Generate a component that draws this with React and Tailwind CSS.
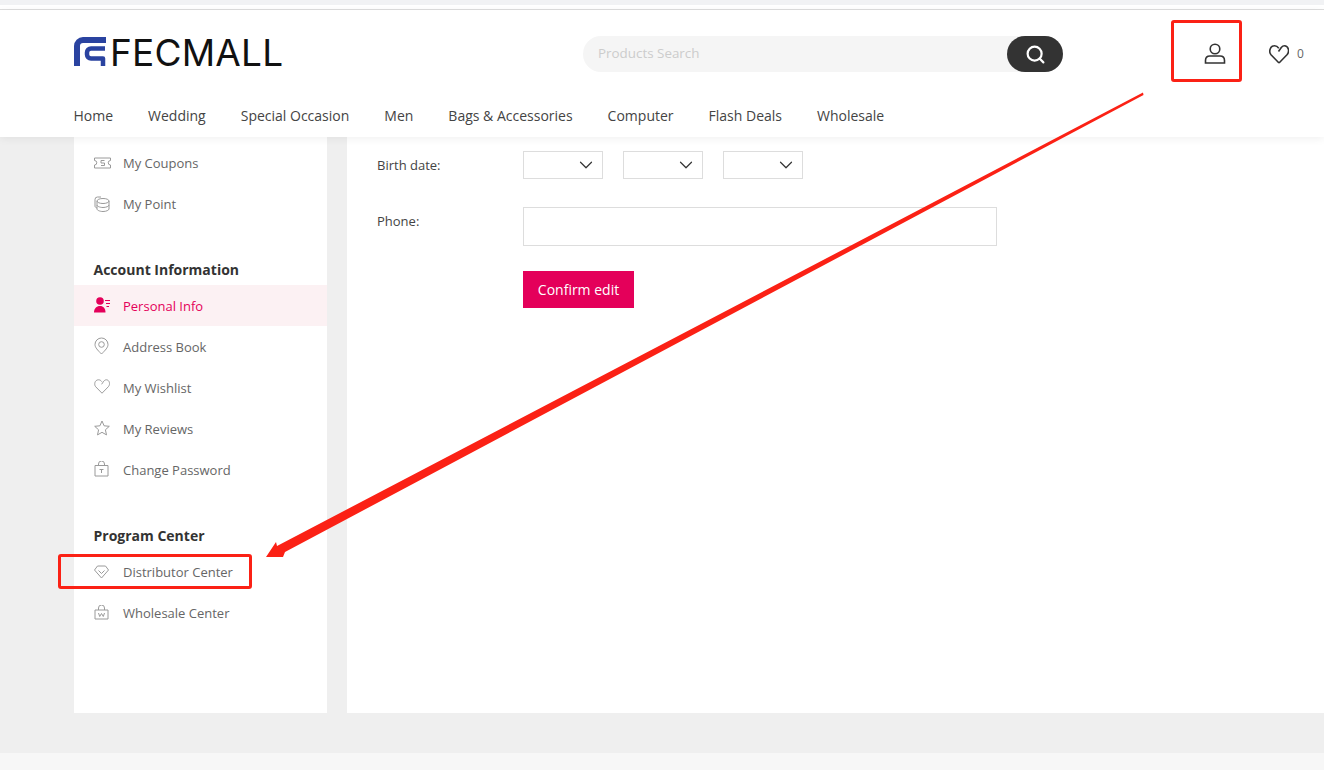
import { ChevronDown, Search } from 'lucide-react';

const navItems = ['Home', 'Wedding', 'Special Occasion', 'Men', 'Bags & Accessories', 'Computer', 'Flash Deals', 'Wholesale'];

const CouponIcon = () => (
    <svg width="17" height="12" viewBox="0 0 17 12" fill="none" stroke="#9a9a9a" strokeWidth="1">
        <path d="M.5 1h16v2.500a2.200 2.200 0 0 0 0 4.500V11H.5V8a2.200 2.200 0 0 0 0-4.500z" />
        <path d="M10.500 3.500H7v2.500h3.500v2.500H7" />
    </svg>
);
const PointIcon = () => (
    <svg width="16" height="16" viewBox="0 0 16 16" fill="none" stroke="#9a9a9a" strokeWidth="1">
        <ellipse cx="9" cy="5" rx="6" ry="2.500" />
        <path d="M3 5v8c0 1.200 2.700 2.500 6 2.500s6-1.300 6-2.500V5M3 9c0 1.200 2.700 2.500 6 2.500s6-1.300 6-2.500" />
        <path d="M7 1H3.500A2.500 2.500 0 0 0 1 3.500V10c0 1 .7 1.600 2 2" />
    </svg>
);
const PersonIcon = () => (
    <svg width="16" height="16" viewBox="0 0 16 16" fill="#e4005a">
        <circle cx="6" cy="4" r="3.800" />
        <path d="M0 15.500c0-4 2.500-6.500 6-6.500s5.500 2.500 5.500 6.500z" />
        <path d="M11 3h5v1h-5zM12 6h4v1h-4zM12.500 9h2.500v1h-2.500z" />
    </svg>
);
const PinIcon = () => (
    <svg width="15" height="18" viewBox="0 0 15 18" fill="none" stroke="#9a9a9a" strokeWidth="1">
        <path d="M7.500 17C3.500 13 1 10.500 1 7.500a6.500 6.500 0 0 1 13 0c0 3-2.500 5.500-6.500 9.500z" />
        <circle cx="7.500" cy="7.500" r="2.800" />
    </svg>
);
const WishIcon = () => (
    <svg width="16" height="15" viewBox="0 0 20 19" fill="none" stroke="#9a9a9a" strokeWidth="1.250" strokeLinejoin="round">
        <path d="M10 18 2 9.800C-.4 7 .8 1 5.600 1c1.700 0 3 .8 4.200 2.400M9.500 6.700 12.300 2.700C13.300 1.500 14.500 1 15.500 1c3.800 0 5.500 5.500 2.500 8.800L10 18" />
    </svg>
);
const StarIcon = () => (
    <svg width="16" height="16" viewBox="0 0 16 16" fill="none" stroke="#9a9a9a" strokeWidth="1" strokeLinejoin="round">
        <path d="M8 1l2.100 4.800 5.200.5-3.900 3.500 1.100 5.100L8 12.300l-4.500 2.600 1.100-5.100L.7 6.300l5.200-.5z" />
    </svg>
);
const LockIcon = () => (
    <svg width="15" height="16" viewBox="0 0 15 16" fill="none" stroke="#9a9a9a" strokeWidth="1">
        <path d="M1 4.500h13v10.500H1z" />
        <path d="M4.500 4.500V3a3 3 0 0 1 6 0v1.500" />
        <path d="M5.500 8.500h4M7.500 8.500V12" />
    </svg>
);
const DiamondIcon = () => (
    <svg width="15" height="14" viewBox="0 0 15 14" fill="none" stroke="#9a9a9a" strokeWidth="1" strokeLinejoin="round">
        <path d="M3.500 1h8l3 4-7 8-7-8z" />
        <path d="M4.500 5.500l3 3 3-3" />
    </svg>
);
const BagIcon = () => (
    <svg width="15" height="15" viewBox="0 0 15 15" fill="none" stroke="#9a9a9a" strokeWidth="1">
        <path d="M1 5h13v9H1z" />
        <path d="M4.500 5V3a3 3 0 0 1 6 0v2" />
        <path d="M4.500 8l1.200 3.500L7.500 8.500l1.800 3L10.500 8" />
    </svg>
);

function SideItem({ icon: Icon, label, active, low }) {
    return (
        <div className={`flex h-[41px] items-center pl-5 text-[13px] ${low ? 'pt-[2px]' : ''} ${active ? 'bg-[#fcf1f3] text-[#e4005a]' : 'text-[#666666]'}`}>
            <span className={`flex w-[29px] shrink-0 items-center ${low ? '-mt-[4px]' : '-mt-[2px]'}`}>
                <Icon />
            </span>
            {label}
        </div>
    );
}

function DateSelect() {
    return (
        <div className="flex h-[28px] w-20 items-center justify-end border border-[#dddddd] pr-[5px]">
            <ChevronDown size={22} strokeWidth={1.300} className="text-[#333333]" />
        </div>
    );
}

export default function App() {
    return (
        <div className="relative flex h-[770px] w-[1324px] flex-col overflow-hidden bg-[#efefef] font-['Open_Sans',sans-serif]">
            {/* browser strip above the header */}
            <div className="h-[5px] bg-[#f1f2f4]" />
            <div className="h-[4px] bg-white" />
            <div className="h-px bg-[#dddddd]" />

            {/* Header */}
            <header className="relative z-10 h-[127px] bg-white shadow-[0_2px_8px_rgba(0,0,0,0.06)]">
                <div className="flex h-[88px] items-center pl-[74px]">
                    <div className="flex w-[509px] items-center gap-[3px] pb-[4px]">
                        <svg width="33" height="30" viewBox="0 0 33 30" fill="none" stroke="#2a43a0" strokeLinejoin="round">
                            <path d="M32 3H9a6 6 0 0 0-6 6v20" strokeWidth="6" />
                            <path d="M31 11.500H17a4 4 0 0 0-4 4v2a4 4 0 0 0 4 4h12v7.500" strokeWidth="4.500" />
                        </svg>
                        <span className="font-['Inter',sans-serif] text-[37px] leading-none font-normal tracking-[0.2px] text-[#111111]">FECMALL</span>
                    </div>
                    <div className="flex h-9 w-[480px] items-center justify-between rounded-full bg-[#f5f5f5] pl-[15px]">
                        <span className="pb-[2px] text-[13.400px] text-[#cccccc]">Products Search</span>
                        <div className="flex h-9 w-14 items-center justify-center rounded-full bg-[#333333]">
                            <Search size={21} strokeWidth={2.500} className="text-white" />
                        </div>
                    </div>
                    <div className="ml-[141px] flex items-center">
                        <svg width="22" height="22" viewBox="0 0 22 22" fill="none" stroke="#333333" strokeWidth="1.600">
                            <circle cx="11" cy="6" r="4.800" />
                            <path d="M1.500 20v-2.500c0-2.800 2-4.500 4.500-4.500h10c2.500 0 4.500 1.700 4.500 4.500V20z" />
                        </svg>
                    </div>
                    <svg className="ml-[43px]" width="20" height="20" viewBox="0 0 20 20" fill="none" stroke="#333333" strokeWidth="1.600" strokeLinejoin="round">
                        <path d="M10 19 2 10.800C-.4 8 .8 1.800 5.600 1.800c1.700 0 3 .8 4.200 2.400M9.500 7.500 12.300 3.500c1-1.200 2.200-1.700 3.200-1.700 3.800 0 5.500 5.500 2.500 9L10 19" />
                    </svg>
                    <span className="ml-[8px] text-[12px] text-[#666666]">0</span>
                </div>
                <nav className="flex gap-[35px] pt-[8px] pl-[73.500px] text-[14px] leading-[20px] text-[#444444]">
                    {navItems.map((item) => (
                        <span key={item}>{item}</span>
                    ))}
                </nav>
            </header>

            {/* Content */}
            <main className="flex h-[576px] shrink-0 pl-[74px]">
                <aside className="mr-5 w-[253px] bg-white pt-[6px]">
                    <SideItem icon={CouponIcon} label="My Coupons" />
                    <SideItem icon={PointIcon} label="My Point" />
                    <h3 className="h-[60px] pt-[35px] pl-[19.500px] text-[14px] leading-[20px] font-bold text-[#333333]">Account Information</h3>
                    <SideItem icon={PersonIcon} label="Personal Info" active low />
                    <SideItem icon={PinIcon} label="Address Book" low />
                    <SideItem icon={WishIcon} label="My Wishlist" low />
                    <SideItem icon={StarIcon} label="My Reviews" low />
                    <SideItem icon={LockIcon} label="Change Password" low />
                    <h3 className="h-[62px] pt-[36px] pl-[19.500px] text-[14px] leading-[20px] font-bold text-[#333333]">Program Center</h3>
                    <SideItem icon={DiamondIcon} label="Distributor Center" />
                    <SideItem icon={BagIcon} label="Wholesale Center" />
                </aside>
                <section className="flex-1 bg-white pt-[14px] pl-[30px] text-[13px] text-[#444444]">
                    <div className="flex items-center">
                        <span className="w-[146px] pt-[2px]">Birth date:</span>
                        <div className="flex gap-5">
                            <DateSelect />
                            <DateSelect />
                            <DateSelect />
                        </div>
                    </div>
                    <div className="mt-7 flex items-start">
                        <span className="w-[146px] leading-[28px]">Phone:</span>
                        <div className="h-[39px] w-[474px] border border-[#dddddd]" />
                    </div>
                    <button className="mt-[25px] ml-[146px] h-[37px] w-[111px] bg-[#e4005a] text-[14px] text-white">Confirm edit</button>
                </section>
            </main>
            <div className="mt-10 flex-1 bg-[#f7f7f7]" />

            {/* Annotations drawn over the screenshot */}
            <div className="absolute top-5 left-[1171px] z-20 h-[62px] w-[71px] rounded-[3px] border-[3px] border-[#fb2115]" />
            <div className="absolute top-[554px] left-[58px] z-20 h-[35px] w-[194px] rounded-[3px] border-[3px] border-[#fb2115]" />
            <svg className="absolute top-0 left-0 z-20" width="1324" height="770" fill="#fb2115">
                <polygon points="1143,92.500 1143.500,95 285,552 283,557 266,557 276,542 277,546" />
            </svg>
        </div>
    );
}
